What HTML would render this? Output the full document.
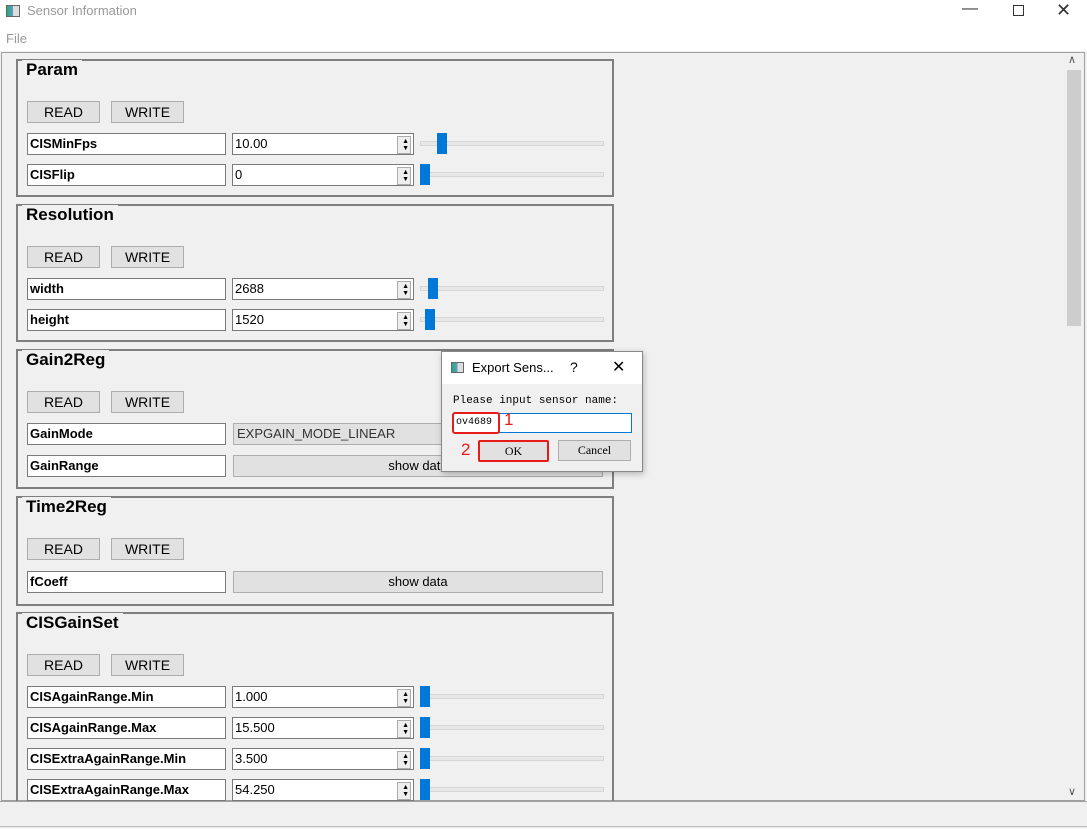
<!DOCTYPE html>
<html><head><meta charset="utf-8"><style>
*{box-sizing:border-box;margin:0;padding:0}
body{width:1087px;height:829px;background:#f0f0f0;position:relative;overflow:hidden;font-family:"Liberation Sans",Arial,sans-serif;font-size:13px;color:#000}
.a{position:absolute}
.grp{position:absolute;left:16px;width:598px;border:2px solid #7f7f7f}
.gt{position:absolute;left:4px;top:-1px;background:#f0f0f0;padding:0 4px;font-weight:bold;font-size:17px;line-height:20px}
.btn{position:absolute;width:73px;height:22px;background:#e1e1e1;border:1px solid #adadad;text-align:center;line-height:20px;font-size:14px}
.lb{position:absolute;left:27px;width:199px;height:22px;background:#fff;border:1px solid #7a7a7a;font-weight:bold;padding-left:2px;line-height:20px;font-size:13px}
.sp{position:absolute;left:232px;width:182px;height:22px;background:#fff;border:1px solid #7a7a7a;padding-left:2px;line-height:20px;font-size:13px}
.sp:after{content:"";position:absolute;right:2px;top:2px;width:12px;height:16px;border:1px solid #aaa;background:#eee}
.sp i{position:absolute;right:4px;font-style:normal;font-size:7px;line-height:7px;z-index:1}
.tr{position:absolute;left:420px;width:184px;height:5px;background:#e7e7e7;border:1px solid #d6d6d6}
.hd{position:absolute;width:10px;height:21px;background:#0078d7}
.wb{position:absolute;left:233px;width:370px;height:22px;background:#e1e1e1;border:1px solid #adadad;text-align:center;line-height:20px;font-size:13px}
</style></head><body>
<div class="a" style="left:0;top:0;width:1087px;height:51px;background:#fff"></div>
<div class="a" style="left:6px;top:5px;width:14px;height:12px;border:1px solid #666;background:linear-gradient(90deg,#2a7 0,#69c 50%,#ddd 50%)"></div>
<div class="a" style="left:27px;top:3px;color:#999;font-size:13px">Sensor Information</div>
<div class="a" style="left:962px;top:0;font-size:16px;color:#333">&#8212;</div>
<div class="a" style="left:1013px;top:5px;width:11px;height:11px;border:1px solid #333"></div>
<div class="a" style="left:1056px;top:0;font-size:18px;color:#333">&#10005;</div>
<div class="a" style="left:6px;top:31px;color:#999;font-size:13px">File</div>
<div class="a" style="left:1px;top:52px;width:1084px;height:749px;border:1px solid #a0a0a0"></div>
<div class="a" style="left:1065px;top:53px;width:18px;height:747px;background:#f0f0f0"></div>
<div class="a" style="left:1067px;top:70px;width:14px;height:256px;background:#cdcdcd"></div>
<div class="a" style="left:1068px;top:53px;font-size:11px;color:#555">&#8743;</div>
<div class="a" style="left:1068px;top:785px;font-size:11px;color:#555">&#8744;</div>

<div class="grp" style="top:59px;height:138px"><div class="gt">Param</div></div>
<div class="btn" style="left:27px;top:101px">READ</div><div class="btn" style="left:111px;top:101px">WRITE</div>
<div class="lb" style="top:133px">CISMinFps</div><div class="sp" style="top:133px">10.00<i style="top:4px">&#9650;</i><i style="top:11px">&#9660;</i></div><div class="tr" style="top:141px"></div><div class="hd" style="left:437px;top:133px"></div>
<div class="lb" style="top:164px">CISFlip</div><div class="sp" style="top:164px">0<i style="top:4px">&#9650;</i><i style="top:11px">&#9660;</i></div><div class="tr" style="top:172px"></div><div class="hd" style="left:420px;top:164px"></div>

<div class="grp" style="top:204px;height:138px"><div class="gt">Resolution</div></div>
<div class="btn" style="left:27px;top:246px">READ</div><div class="btn" style="left:111px;top:246px">WRITE</div>
<div class="lb" style="top:278px">width</div><div class="sp" style="top:278px">2688<i style="top:4px">&#9650;</i><i style="top:11px">&#9660;</i></div><div class="tr" style="top:286px"></div><div class="hd" style="left:428px;top:278px"></div>
<div class="lb" style="top:309px">height</div><div class="sp" style="top:309px">1520<i style="top:4px">&#9650;</i><i style="top:11px">&#9660;</i></div><div class="tr" style="top:317px"></div><div class="hd" style="left:425px;top:309px"></div>

<div class="grp" style="top:349px;height:140px"><div class="gt">Gain2Reg</div></div>
<div class="btn" style="left:27px;top:391px">READ</div><div class="btn" style="left:111px;top:391px">WRITE</div>
<div class="lb" style="top:423px">GainMode</div><div class="wb" style="top:423px;text-align:left;padding-left:3px;color:#333">EXPGAIN_MODE_LINEAR</div>
<div class="lb" style="top:455px">GainRange</div><div class="wb" style="top:455px">show data</div>

<div class="grp" style="top:496px;height:110px"><div class="gt">Time2Reg</div></div>
<div class="btn" style="left:27px;top:538px">READ</div><div class="btn" style="left:111px;top:538px">WRITE</div>
<div class="lb" style="top:571px">fCoeff</div><div class="wb" style="top:571px">show data</div>

<div class="grp" style="top:612px;height:200px"><div class="gt">CISGainSet</div></div>
<div class="btn" style="left:27px;top:654px">READ</div><div class="btn" style="left:111px;top:654px">WRITE</div>
<div class="lb" style="top:686px">CISAgainRange.Min</div><div class="sp" style="top:686px">1.000<i style="top:4px">&#9650;</i><i style="top:11px">&#9660;</i></div><div class="tr" style="top:694px"></div><div class="hd" style="left:420px;top:686px"></div>
<div class="lb" style="top:717px">CISAgainRange.Max</div><div class="sp" style="top:717px">15.500<i style="top:4px">&#9650;</i><i style="top:11px">&#9660;</i></div><div class="tr" style="top:725px"></div><div class="hd" style="left:420px;top:717px"></div>
<div class="lb" style="top:748px">CISExtraAgainRange.Min</div><div class="sp" style="top:748px">3.500<i style="top:4px">&#9650;</i><i style="top:11px">&#9660;</i></div><div class="tr" style="top:756px"></div><div class="hd" style="left:420px;top:748px"></div>
<div class="lb" style="top:779px">CISExtraAgainRange.Max</div><div class="sp" style="top:779px">54.250<i style="top:4px">&#9650;</i><i style="top:11px">&#9660;</i></div><div class="tr" style="top:787px"></div><div class="hd" style="left:420px;top:779px"></div>

<div class="a" style="left:0;top:801px;width:1087px;height:28px;background:#f0f0f0;border-top:1px solid #a0a0a0"></div>
<div class="a" style="left:0;top:826px;width:1087px;height:3px;border-top:1px solid #bbb"></div>

<div class="a" style="left:441px;top:351px;width:202px;height:121px;background:#f0f0f0;border:1px solid #888;box-shadow:1px 2px 6px rgba(0,0,0,.25)">
  <div class="a" style="left:0;top:0;width:200px;height:32px;background:#fff"></div>
  <div class="a" style="left:9px;top:10px;width:13px;height:11px;border:1px solid #666;background:linear-gradient(90deg,#2a7 0,#69c 50%,#ddd 50%)"></div>
  <div class="a" style="left:30px;top:8px;font-size:13px">Export Sens...</div>
  <div class="a" style="left:128px;top:7px;font-size:14px">?</div>
  <div class="a" style="left:170px;top:5px;font-size:16px">&#10005;</div>
  <div class="a" style="left:11px;top:43px;font-family:'Liberation Mono',monospace;font-size:11px">Please input sensor name:</div>
  <div class="a" style="left:11px;top:61px;width:179px;height:20px;background:#fff;border:1px solid #0078d7"></div>
  <div class="a" style="left:10px;top:60px;width:48px;height:22px;border:2px solid #e81b1b;border-radius:3px;font-family:'Liberation Mono',monospace;font-size:10px;line-height:18px;padding-left:2px">ov4689</div>
  <div class="a" style="left:62px;top:58px;color:#e81b1b;font-size:17px">1</div>
  <div class="a" style="left:19px;top:88px;color:#e81b1b;font-size:17px">2</div>
  <div class="a" style="left:36px;top:88px;width:71px;height:22px;background:#e1e1e1;border:2px solid #e81b1b;border-radius:2px;text-align:center;line-height:18px;font-family:'Liberation Serif',serif;font-size:12px">OK</div>
  <div class="a" style="left:116px;top:88px;width:73px;height:21px;background:#e1e1e1;border:1px solid #adadad;text-align:center;line-height:19px;font-family:'Liberation Serif',serif;font-size:12px">Cancel</div>
</div>
</body></html>
